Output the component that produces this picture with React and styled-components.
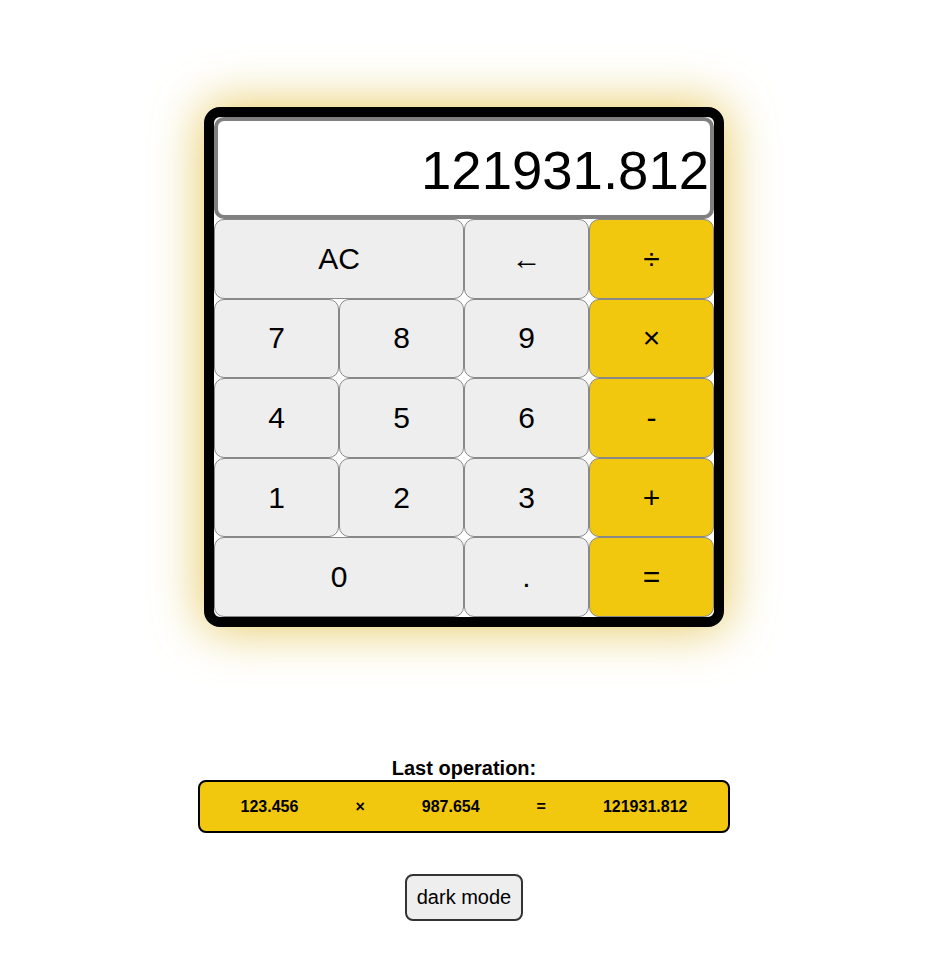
import React from 'react'
import styled, { createGlobalStyle } from 'styled-components'

const GlobalStyle = createGlobalStyle`
    body {
        margin: 8px 9px 8px 8px;
        background: #fff;
        font-family: "Liberation Sans", Arial, sans-serif;
        color: #000;
    }
`

const StyledPage = styled.div`
    display: flex;
    flex-direction: column;
    align-items: center;
`

const StyledCalculator = styled.div`
    margin-top: 99px;
    width: 500px;
    height: 500px;
    border: 10px solid #000;
    border-radius: 16px;
    background: #fff;
    box-shadow: 0 0 50px 2px rgba(222, 182, 40, 0.75);
    display: grid;
    grid-template-columns: repeat(4, 1fr);
    grid-template-rows: 102px repeat(5, 1fr);
`

const StyledDisplay = styled.div`
    grid-column: 1 / -1;
    box-sizing: border-box;
    border: 4px solid #808080;
    border-radius: 10px;
    display: flex;
    align-items: center;
    justify-content: flex-end;
    padding: 4px 1px 0 0;
    font-size: 54.5px;
    overflow: hidden;
`

const StyledKey = styled.button`
    grid-column: span ${props => props.span || 1};
    font-family: inherit;
    font-size: 30px;
    color: #000;
    background: ${props => props.op ? '#f2c80f' : '#eeeeee'};
    border: 1px solid #888;
    border-radius: 10px;
    padding: 0;
    margin: 0;
    cursor: pointer;
`

const StyledTitle = styled.div`
    margin-top: 130px;
    font-size: 20px;
    font-weight: bold;
`

const StyledLastOp = styled.div`
    width: 528px;
    height: 49px;
    border: 2px solid #000;
    border-radius: 8px;
    background: #f2c80f;
    display: flex;
    align-items: center;
    justify-content: center;
    gap: 57px;
    font-size: 16px;
    font-weight: bold;
`

const StyledModeButton = styled.button`
    margin-top: 41px;
    font-family: inherit;
    font-size: 20px;
    line-height: 23px;
    color: #000;
    background: #eeeeee;
    border: 2px solid #333;
    border-radius: 8px;
    padding: 10px 10px;
    cursor: pointer;
`

const keys = [
    { label: 'AC', span: 2 },
    { label: '←' },
    { label: '÷', op: true },
    { label: '7' }, { label: '8' }, { label: '9' },
    { label: '×', op: true },
    { label: '4' }, { label: '5' }, { label: '6' },
    { label: '-', op: true },
    { label: '1' }, { label: '2' }, { label: '3' },
    { label: '+', op: true },
    { label: '0', span: 2 },
    { label: '.' },
    { label: '=', op: true },
]

export default function App() {
    return (
        <StyledPage>
            <GlobalStyle />
            <StyledCalculator>
                <StyledDisplay>121931.812</StyledDisplay>
                {keys.map(k => (
                    <StyledKey key={k.label} span={k.span} op={k.op}>
                        {k.label}
                    </StyledKey>
                ))}
            </StyledCalculator>
            <StyledTitle>Last operation:</StyledTitle>
            <StyledLastOp>
                <span>123.456</span>
                <span>×</span>
                <span>987.654</span>
                <span>=</span>
                <span>121931.812</span>
            </StyledLastOp>
            <StyledModeButton>dark mode</StyledModeButton>
        </StyledPage>
    )
}
